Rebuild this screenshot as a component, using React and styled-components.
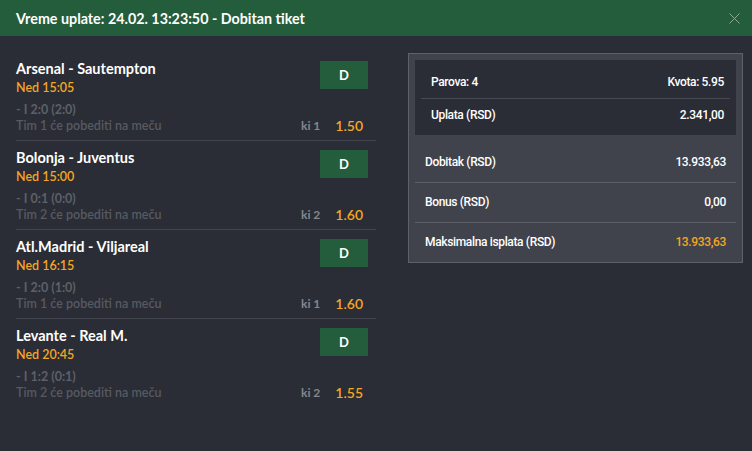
import React from "react";
import styled, { createGlobalStyle } from "styled-components";

const Global = createGlobalStyle`
  html, body { margin: 0; padding: 0; background: #2a2d35; }
  body { font-family: "Lato", "Open Sans", sans-serif; -webkit-font-smoothing: antialiased; }
  * { box-sizing: border-box; }
`;

const Page = styled.div`
  width: 752px;
  height: 451px;
  background: #2a2d35;
  overflow: hidden;
`;

const Header = styled.div`
  height: 36px;
  background: #245d3c;
  display: flex;
  align-items: center;
  justify-content: space-between;
  padding: 0 10px 0 16px;
  color: #fff;
  font-size: 14.3px;
  font-weight: 700;
`;

const Close = styled.button`
  width: 16px;
  height: 16px;
  padding: 0;
  border: 0;
  background: transparent;
  display: flex;
  align-items: center;
  justify-content: center;
`;

const Body = styled.div`
  display: flex;
  align-items: flex-start;
  padding: 16px 0 0 16px;
`;

const Matches = styled.div`
  width: 360px;
  flex-shrink: 0;
  display: flex;
  flex-direction: column;
`;

const Match = styled.div`
  height: 89px;
  padding: 9px 13px 0 0;
  border-bottom: ${(p) => (p.$last ? "none" : "1px solid #41444c")};
  display: flex;
  flex-direction: column;
`;

const Top = styled.div`
  display: flex;
  justify-content: space-between;
  align-items: flex-start;
  margin-right: -5px;
`;

const Info = styled.div`
  display: flex;
  flex-direction: column;
  gap: 3px;
`;

const Teams = styled.div`
  color: #fff;
  font-size: 14.5px;
  font-weight: 700;
  line-height: 16px;
`;

const Time = styled.div`
  color: #f5a623;
  font-size: 12.5px;
  font-weight: 600;
  line-height: 16px;
`;

const Pick = styled.div`
  width: 48px;
  height: 28px;
  background: #245d3c;
  color: #fff;
  font-size: 13px;
  font-weight: 700;
  display: flex;
  align-items: center;
  justify-content: center;
`;

const Bottom = styled.div`
  margin-top: 6px;
  display: flex;
  justify-content: space-between;
  align-items: flex-end;
`;

const Details = styled.div`
  display: flex;
  flex-direction: column;
`;

const Result = styled.div`
  color: #5d6068;
  font-size: 12.5px;
  font-weight: 700;
  line-height: 16px;
`;

const Desc = styled.div`
  color: #575a62;
  font-size: 12.5px;
  font-weight: 600;
  line-height: 16px;
`;

const OddWrap = styled.div`
  display: flex;
  align-items: center;
  gap: 15px;
  line-height: 16px;
`;

const Ki = styled.span`
  color: #84878d;
  font-size: 12px;
  font-weight: 700;
`;

const Odd = styled.span`
  color: #f5a623;
  font-size: 14px;
  font-weight: 600;
`;

const Summary = styled.div`
  margin-left: 32px;
  margin-top: 1px;
  width: 335px;
  flex-shrink: 0;
  background: #40434b;
  border: 1px solid #5e6169;
  padding: 6px 6px 0 6px;
  font-family: "Roboto", sans-serif;
  font-weight: 500;
  font-size: 12px;
  letter-spacing: -0.35px;
  color: #fff;
`;

const Inner = styled.div`
  background: #2a2d35;
  padding: 6px 6px 5px 6px;
`;

const InnerRow = styled.div`
  height: 32px;
  display: flex;
  align-items: center;
  justify-content: space-between;
  padding: 0 6px 0 10px;
  border-top: ${(p) => (p.$first ? "none" : "1px solid #464951")};
`;

const Lower = styled.div`
  padding-top: 7px;
`;

const LowerRow = styled.div`
  height: 40px;
  display: flex;
  align-items: center;
  justify-content: space-between;
  padding: 0 10px 1px 10px;
  border-top: ${(p) => (p.$first ? "none" : "1px solid #5b5e66")};
`;

const Value = styled.span`
  color: ${(p) => (p.$accent ? "#f5a623" : "#fff")};
`;

const matches = [
  { teams: "Arsenal - Sautempton", time: "Ned 15:05", result: "- I 2:0 (2:0)", desc: "Tim 1 će pobediti na meču", ki: "ki 1", odd: "1.50" },
  { teams: "Bolonja - Juventus", time: "Ned 15:00", result: "- I 0:1 (0:0)", desc: "Tim 2 će pobediti na meču", ki: "ki 2", odd: "1.60" },
  { teams: "Atl.Madrid - Viljareal", time: "Ned 16:15", result: "- I 2:0 (1:0)", desc: "Tim 1 će pobediti na meču", ki: "ki 1", odd: "1.60" },
  { teams: "Levante - Real M.", time: "Ned 20:45", result: "- I 1:2 (0:1)", desc: "Tim 2 će pobediti na meču", ki: "ki 2", odd: "1.55" },
];

export default function App() {
  return (
    <Page>
      <Global />
      <Header>
        <span>Vreme uplate: 24.02. 13:23:50 - Dobitan tiket</span>
        <Close aria-label="close">
          <svg width="11" height="11" viewBox="0 0 11 11">
            <path d="M0.5 0.5 L10.5 10.5 M10.5 0.5 L0.5 10.5" stroke="#8fa89a" strokeWidth="1" />
          </svg>
        </Close>
      </Header>
      <Body>
        <Matches>
          {matches.map((m, i) => (
            <Match key={i} $last={i === matches.length - 1}>
              <Top>
                <Info>
                  <Teams>{m.teams}</Teams>
                  <Time>{m.time}</Time>
                </Info>
                <Pick>D</Pick>
              </Top>
              <Bottom>
                <Details>
                  <Result>{m.result}</Result>
                  <Desc>{m.desc}</Desc>
                </Details>
                <OddWrap>
                  <Ki>{m.ki}</Ki>
                  <Odd>{m.odd}</Odd>
                </OddWrap>
              </Bottom>
            </Match>
          ))}
        </Matches>
        <Summary>
          <Inner>
            <InnerRow $first>
              <span>Parova: 4</span>
              <span>Kvota: 5.95</span>
            </InnerRow>
            <InnerRow>
              <span>Uplata (RSD)</span>
              <span>2.341,00</span>
            </InnerRow>
          </Inner>
          <Lower>
            <LowerRow $first>
              <span>Dobitak (RSD)</span>
              <Value>13.933,63</Value>
            </LowerRow>
            <LowerRow>
              <span>Bonus (RSD)</span>
              <Value>0,00</Value>
            </LowerRow>
            <LowerRow>
              <span>Maksimalna isplata (RSD)</span>
              <Value $accent>13.933,63</Value>
            </LowerRow>
          </Lower>
        </Summary>
      </Body>
    </Page>
  );
}
